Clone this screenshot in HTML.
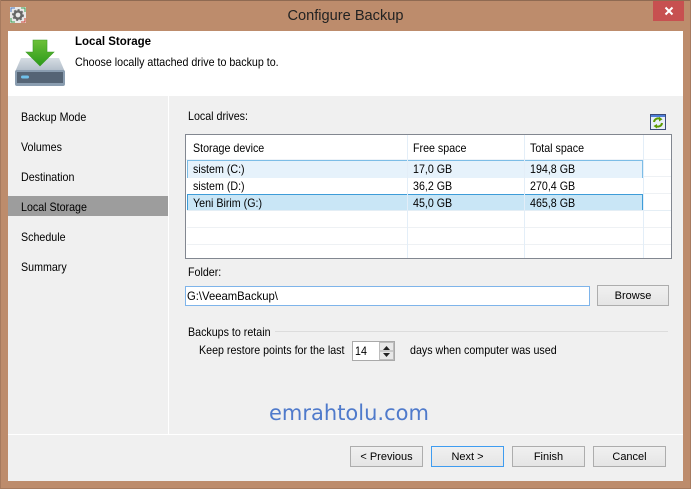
<!DOCTYPE html>
<html><head><meta charset="utf-8"><style>
html,body{margin:0;padding:0;width:691px;height:489px;overflow:hidden;background:#bd8c6c}
body{position:relative;font-family:"Liberation Sans",sans-serif;font-size:12px;color:#000}
div,span.t{position:absolute;box-sizing:border-box}
.t{white-space:nowrap;line-height:16px;height:16px;transform:scaleX(.89);transform-origin:0 0}
.n{transform:none}
.b{border:1px solid #adadad;background:linear-gradient(#f0f0f0,#e5e5e5);text-align:center;line-height:21px;width:73px;height:21px;top:446px;font-size:11px}
</style></head><body>
<div style="left:0;top:0;width:691px;height:1px;background:#8f6a52"></div>
<div style="left:0;top:0;width:1px;height:489px;background:#a67a5e"></div>
<div style="left:690px;top:0;width:1px;height:489px;background:#a67a5e"></div>
<div style="left:0;top:488px;width:691px;height:1px;background:#a67a5e"></div>
<div style="left:653px;top:1px;width:31px;height:20px;background:#c75050"></div>
<svg style="position:absolute;left:664px;top:6px" width="10" height="10"><path d="M1.5 1.5L8.5 8.5M8.5 1.5L1.5 8.5" stroke="#fff" stroke-width="2"/></svg>
<svg style="position:absolute;left:10px;top:7px" width="16" height="16"><rect width="16" height="16" fill="#e9e9e9"/><path d="M1 5V1H5" stroke="#4a78c0" fill="none"/><path d="M11 1H15V5" stroke="#3aa050" fill="none"/><path d="M1 11V15H5" stroke="#3aa050" fill="none"/><path d="M11 15H15V11" stroke="#d04030" fill="none"/><circle cx="8" cy="8" r="3.6" fill="none" stroke="#666" stroke-width="2.4"/><circle cx="8" cy="8" r="5.2" fill="none" stroke="#666" stroke-width="1.4" stroke-dasharray="2 2"/></svg>
<span class="t n" style="left:200px;width:291px;text-align:center;top:7px;height:18px;line-height:18px;font-size:14.6px;color:#222">Configure Backup</span>

<div style="left:8px;top:31px;width:675px;height:450px;background:#f0f0f0"></div>
<div style="left:8px;top:31px;width:675px;height:65px;background:#fff"></div>
<svg style="position:absolute;left:14px;top:39px" width="52" height="48">
<defs><linearGradient id="a" x1="0" y1="0" x2="0" y2="1"><stop offset="0" stop-color="#d6dde4"/><stop offset="1" stop-color="#aebac6"/></linearGradient>
<linearGradient id="g" x1="0" y1="0" x2="0" y2="1"><stop offset="0" stop-color="#6cc038"/><stop offset="1" stop-color="#2b9a1a"/></linearGradient></defs>
<path d="M7 19H45L51 33H1Z" fill="url(#a)"/>
<rect x="1" y="31" width="50" height="16" rx="2" fill="#8a9db0"/>
<rect x="3" y="33" width="46" height="11" fill="#556475"/>
<rect x="7" y="36.5" width="8" height="3" rx="1.5" fill="#6fc0ea"/>
<path d="M19 1H33V13H40L26 27L12 13H19Z" fill="url(#g)" stroke="#3c9a26" stroke-width=".6"/>
</svg>
<span class="t n" style="left:75px;top:34px;font-weight:bold;font-size:11.5px">Local Storage</span>
<span class="t" style="left:75px;top:54px">Choose locally attached drive to backup to.</span>

<div style="left:168px;top:96px;width:1px;height:338px;background:#fff"></div>
<div style="left:8px;top:196px;width:160px;height:20px;background:#9d9d9d"></div>
<span class="t" style="left:21px;top:109px">Backup Mode</span>
<span class="t" style="left:21px;top:139px">Volumes</span>
<span class="t" style="left:21px;top:169px">Destination</span>
<span class="t" style="left:21px;top:199px">Local Storage</span>
<span class="t" style="left:21px;top:229px">Schedule</span>
<span class="t" style="left:21px;top:259px">Summary</span>

<span class="t" style="left:188px;top:108px">Local drives:</span>
<svg style="position:absolute;left:650px;top:114px" width="16" height="16"><rect x=".5" y=".5" width="15" height="15" fill="#e8eef8" stroke="#3b4a78"/><rect x="1" y="1" width="14" height="2" fill="#4f7fd8"/><path d="M4 8a4 4 0 0 1 6-3M12 9a4 4 0 0 1-6 3" stroke="#5c9a00" stroke-width="2" fill="none"/><path d="M9 2.8L12.5 5.2L9 7.5ZM7 10L3.5 12L7 14.5Z" fill="#5c9a00"/></svg>

<div style="left:185px;top:134px;width:487px;height:125px;background:#fff;border:1px solid #828790"></div>
<div style="left:186px;top:159px;width:485px;height:1px;background:#eef3f8"></div>
<div style="left:187px;top:160px;width:456px;height:18px;background:#e6f2fb;border:1px solid #7dbde6;border-bottom:0;border-left-width:1px"></div>
<div style="left:187px;top:194px;width:456px;height:17px;background:#c9e6f6;border:1px solid #3d9cd8;border-bottom:1px solid #a9d7f0"></div>
<div style="left:643px;top:176px;width:28px;height:1px;background:#eef1f4"></div>
<div style="left:643px;top:193px;width:28px;height:1px;background:#eef1f4"></div>
<div style="left:187px;top:227px;width:484px;height:1px;background:#eef1f4"></div>
<div style="left:187px;top:244px;width:484px;height:1px;background:#eef1f4"></div>
<div style="left:187px;top:210px;width:484px;height:1px;background:#e4eef5"></div>
<div style="left:407px;top:135px;width:1px;height:123px;background:#e3eef8"></div>
<div style="left:524px;top:135px;width:1px;height:123px;background:#e3eef8"></div>
<div style="left:643px;top:135px;width:1px;height:123px;background:#e3eef8"></div>

<span class="t" style="left:193px;top:140px">Storage device</span>
<span class="t" style="left:413px;top:140px">Free space</span>
<span class="t" style="left:530px;top:140px">Total space</span>
<span class="t" style="left:193px;top:161px">sistem (C:)</span>
<span class="t" style="left:413px;top:161px">17,0 GB</span>
<span class="t" style="left:530px;top:161px">194,8 GB</span>
<span class="t" style="left:193px;top:178px">sistem (D:)</span>
<span class="t" style="left:413px;top:178px">36,2 GB</span>
<span class="t" style="left:530px;top:178px">270,4 GB</span>
<span class="t" style="left:193px;top:195px">Yeni Birim (G:)</span>
<span class="t" style="left:413px;top:195px">45,0 GB</span>
<span class="t" style="left:530px;top:195px">465,8 GB</span>

<span class="t" style="left:188px;top:264px">Folder:</span>
<div style="left:185px;top:286px;width:405px;height:20px;background:#fff;border:1px solid #7eb4ea"></div>
<span class="t" style="left:187px;top:288px;transform:scaleX(.94)">G:\VeeamBackup\</span>
<div class="b" style="left:597px;top:285px;width:72px;height:21px;line-height:21px">Browse</div>

<span class="t" style="left:188px;top:324px">Backups to retain</span>
<div style="left:275px;top:331px;width:393px;height:1px;background:#dcdcdc"></div>
<span class="t" style="left:199px;top:342px">Keep restore points for the last</span>
<div style="left:352px;top:341px;width:43px;height:20px;background:#fff;border:1px solid #a9a9a9"></div>
<span class="t" style="left:355px;top:343px">14</span>
<div style="left:379px;top:342px;width:15px;height:18px;background:#e8e8e8;border:1px solid #bdbdbd"></div>
<svg style="position:absolute;left:380px;top:343px" width="13" height="16"><path d="M6.5 3L10 7H3Z M3 10H10L6.5 14Z" fill="#222"/><path d="M0 8H13" stroke="#aaa"/></svg>
<span class="t" style="left:410px;top:342px">days when computer was used</span>

<span class="t n" style="left:269px;top:399px;height:28px;line-height:28px;font-size:21px;font-family:'DejaVu Sans',sans-serif;color:#4f7acb">emrahtolu.com</span>

<div style="left:8px;top:434px;width:675px;height:1px;background:#fff"></div>
<div class="b" style="left:350px">&lt; Previous</div>
<div class="b" style="left:431px;border-color:#3f9cf0">Next &gt;</div>
<div class="b" style="left:512px">Finish</div>
<div class="b" style="left:593px">Cancel</div>
</body></html>
